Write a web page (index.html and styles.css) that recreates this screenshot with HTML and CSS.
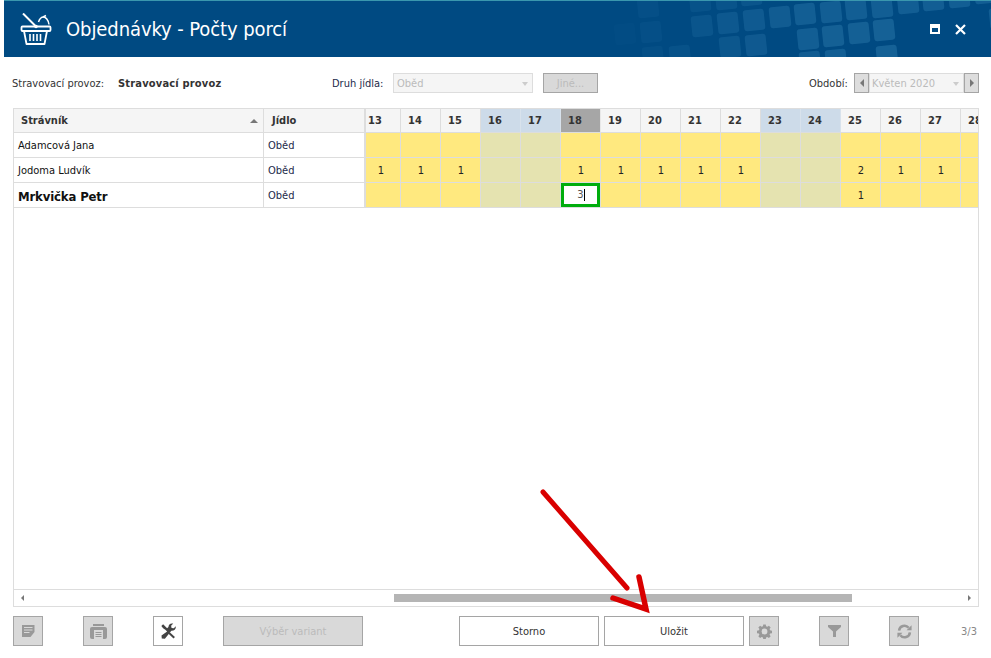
FILE: index.html
```html
<!DOCTYPE html>
<html lang="cs">
<head>
<meta charset="utf-8">
<title>Objednávky - Počty porcí</title>
<link rel="stylesheet" href="styles.css">
</head>
<body>
<div class="page">
  <header class="titlebar">
    <svg class="pattern" width="411" height="56" viewBox="580 1 411 56" aria-hidden="true">
      <defs><rect id="sq" x="-10.500" y="-10.500" width="21" height="21" rx="3" fill="#5fb0dc" transform="rotate(-6)"/></defs>
      <use href="#sq" x="625" y="34" opacity=".03"/>
      <use href="#sq" x="648" y="7" opacity=".08"/>
      <use href="#sq" x="651" y="32" opacity=".08"/>
      <use href="#sq" x="653" y="57" opacity=".07"/>
      <use href="#sq" x="680" y="56" opacity=".12"/>
      <use href="#sq" x="700" y="1" opacity=".12"/>
      <use href="#sq" x="726" y="-1" opacity=".14"/>
      <use href="#sq" x="751" y="-5" opacity=".16"/>
      <use href="#sq" x="702" y="26" opacity=".16"/>
      <use href="#sq" x="728" y="23" opacity=".2"/>
      <use href="#sq" x="754" y="20" opacity=".23"/>
      <use href="#sq" x="780" y="17" opacity=".26"/>
      <use href="#sq" x="730" y="47" opacity=".18"/>
      <use href="#sq" x="756" y="45" opacity=".22"/>
      <use href="#sq" x="805" y="14" opacity=".28"/>
      <use href="#sq" x="831" y="12" opacity=".28"/>
      <use href="#sq" x="856" y="9" opacity=".28"/>
      <use href="#sq" x="882" y="7" opacity=".28"/>
      <use href="#sq" x="908" y="3" opacity=".28"/>
      <use href="#sq" x="933" y="0" opacity=".28"/>
      <use href="#sq" x="959" y="-3" opacity=".28"/>
      <use href="#sq" x="985" y="-7" opacity=".28"/>
      <use href="#sq" x="1000" y="18" opacity=".28"/>
      <use href="#sq" x="1003" y="43" opacity=".28"/>
      <use href="#sq" x="808" y="39" opacity=".28"/>
      <use href="#sq" x="833" y="36" opacity=".3"/>
      <use href="#sq" x="859" y="33" opacity=".3"/>
      <use href="#sq" x="884" y="30" opacity=".32"/>
      <use href="#sq" x="810" y="62" opacity=".26"/>
      <use href="#sq" x="836" y="60" opacity=".28"/>
      <use href="#sq" x="887" y="56" opacity=".32"/>
    </svg>
    <svg class="logo" width="32" height="32" viewBox="0 0 32 32" fill="none" stroke="#fff" aria-hidden="true">
      <rect x="1.500" y="13.500" width="29" height="4.500" rx="1" stroke-width="1.800"/>
      <path d="M4 18l2.500 13h18L27 18" stroke-width="1.800" stroke-linejoin="round"/>
      <path d="M10 21v7M13.500 21v7M17 21v7M20.500 21v7" stroke-width="1.600"/>
      <path d="M3 0.500L15.500 13" stroke-width="2"/>
      <circle cx="16" cy="13.500" r="1.800" fill="#fff" stroke="none"/>
      <path d="M18.500 9c1-3 3-5 5-5s5 3 5.500 7.500" stroke-width="1.500"/>
      <path d="M23 4l3-1.500" stroke-width="1.500"/>
    </svg>
    <h1 class="title">Objednávky - Počty porcí</h1>
    <div class="win-controls">
      <span class="win-max"></span>
      <svg width="11" height="11" viewBox="0 0 11 11" aria-hidden="true"><path d="M1 1l9 9M10 1l-9 9" stroke="#fff" stroke-width="2.200"/></svg>
    </div>
  </header>

  <section class="filters">
    <span class="label label-provoz">Stravovací provoz:</span>
    <strong class="value">Stravovací provoz</strong>
    <span class="label label-druh">Druh jídla:</span>
    <div class="select select-druh">Oběd<span class="caret"></span></div>
    <button class="btn-other" disabled>Jiné...</button>
    <span class="label label-obdobi">Období:</span>
    <div class="spinner">
      <span class="spin-btn"><span class="tri-left"></span></span>
      <div class="select select-month">Květen 2020<span class="caret"></span></div>
      <span class="spin-btn"><span class="tri-right"></span></span>
    </div>
  </section>

  <section class="table">
    <div class="table-body">
      <div class="frozen">
        <div class="th th-name">Strávník<span class="sort"></span></div>
        <div class="th th-meal">Jídlo</div>
        <div class="td name">Adamcová Jana</div><div class="td meal">Oběd</div>
        <div class="td name">Jodoma Ludvík</div><div class="td meal">Oběd</div>
        <div class="td name name-me">Mrkvička Petr</div><div class="td meal">Oběd</div>
      </div>
      <div class="days">
        <div class="days-grid">
          <div class="dh">13</div><div class="dh">14</div><div class="dh">15</div><div class="dh we">16</div><div class="dh we">17</div><div class="dh today">18</div><div class="dh">19</div><div class="dh">20</div><div class="dh">21</div><div class="dh">22</div><div class="dh we">23</div><div class="dh we">24</div><div class="dh">25</div><div class="dh">26</div><div class="dh">27</div><div class="dh">28</div>

          <div class="c"></div><div class="c"></div><div class="c"></div><div class="c w"></div><div class="c w"></div><div class="c"></div><div class="c"></div><div class="c"></div><div class="c"></div><div class="c"></div><div class="c w"></div><div class="c w"></div><div class="c"></div><div class="c"></div><div class="c"></div><div class="c"></div>

          <div class="c">1</div><div class="c">1</div><div class="c">1</div><div class="c w"></div><div class="c w"></div><div class="c">1</div><div class="c">1</div><div class="c">1</div><div class="c">1</div><div class="c">1</div><div class="c w"></div><div class="c w"></div><div class="c">2</div><div class="c">1</div><div class="c">1</div><div class="c"></div>

          <div class="c"></div><div class="c"></div><div class="c"></div><div class="c w"></div><div class="c w"></div><div class="c edit-cell"><div class="edit"><span class="edit-val">3</span></div></div><div class="c"></div><div class="c"></div><div class="c"></div><div class="c"></div><div class="c w"></div><div class="c w"></div><div class="c">1</div><div class="c"></div><div class="c"></div><div class="c"></div>
        </div>
      </div>
    </div>
    <div class="hscroll">
      <span class="tri-left small"></span>
      <div class="track"><div class="thumb"></div></div>
      <span class="tri-right small"></span>
    </div>
  </section>

  <footer class="actions">
    <button class="ib off" disabled><svg width="13" height="12" viewBox="0 0 13 12"><path d="M0 0h12.500v7L8.500 12H0z" fill="#999"/><path d="M2 2.500h8.500M2 5h8.500M2 7.500h5.500" stroke="#d9d9d9"/></svg></button>
    <button class="ib off gap40" disabled><svg width="17" height="15" viewBox="0 0 17 15"><path d="M3 0h11v2H3z" fill="#999"/><path d="M2 3h13a2 2 0 0 1 2 2v8a2 2 0 0 1-2 2H2a2 2 0 0 1-2-2V5a2 2 0 0 1 2-2z" fill="#999"/><path d="M4 6h9v9H4z" fill="#d9d9d9"/><path d="M5.500 8.500h6M5.500 10.500h6M5.500 12.500h6" stroke="#999"/></svg></button>
    <button class="ib gap40"><svg width="16" height="16" viewBox="0 0 18 18"><path d="M1.500 3.500L3.500 1.500 8 6l1.500-1.500C9.500 2.500 11 .5 13.500.5c.8 0 1.400.2 1.400.2L12.500 3l.5 2.500 2.500.5 2.300-2.400c.3 3-1.800 5.400-5 5.200l-7.300 9-3.500-.3-.3-3.500L8 9.500 6 7.500 3.500 6z" fill="#444"/><path d="M11 10.500l5.800 5.200-1.600 1.800-5.600-5.500z" fill="#444"/></svg></button>
    <button class="tb off wide gap40" disabled>Výběr variant</button>
    <button class="tb cancel">Storno</button>
    <button class="tb save">Uložit</button>
    <button class="ib off tight" disabled><svg width="15" height="15" viewBox="0 0 18 18"><path fill="#999" fill-rule="evenodd" d="M7.500.5h3l.4 2.300 1.500.6 1.900-1.300 2.100 2.100-1.300 1.900.6 1.500 2.300.4v3l-2.300.4-.6 1.500 1.300 1.900-2.100 2.100-1.900-1.300-1.500.6-.4 2.300h-3l-.4-2.300-1.500-.6-1.900 1.300-2.100-2.100 1.300-1.900-.6-1.500-2.300-.4v-3l2.300-.4.6-1.500L1.600 4.200l2.100-2.100 1.900 1.300 1.500-.6zM9 5.500a3.500 3.500 0 1 0 0 7 3.500 3.500 0 0 0 0-7z"/></svg></button>
    <button class="ib off gap40" disabled><svg width="13" height="12" viewBox="0 0 13 12"><path d="M0 0h13v2L8 6.500V12H5V6.500L0 2z" fill="#999"/></svg></button>
    <button class="ib off gap40" disabled><svg width="15" height="15" viewBox="0 0 18 18" fill="none"><path d="M2.500 8A6.500 6.500 0 0 1 14 4.500M15.500 10A6.500 6.500 0 0 1 4 13.500" stroke="#999" stroke-width="3"/><path d="M11.500 7.500h6v-6zM6.500 10.500h-6v6z" fill="#999"/></svg></button>
    <span class="count">3/3</span>
  </footer>

  <svg class="arrow" width="120" height="130" viewBox="0 0 120 130" aria-hidden="true">
    <path d="M3 3L87 99" stroke="#d90000" stroke-width="5" stroke-linecap="round" fill="none"/>
    <path d="M73 109L106 120L99 88" stroke="#d90000" stroke-width="5.500" stroke-linecap="round" stroke-linejoin="miter" fill="none"/>
  </svg>
</div>
</body>
</html>
```
FILE: styles.css
```css
* { box-sizing: border-box; }
html, body { margin: 0; padding: 0; background: #fff; }
body { font-family: "DejaVu Sans Condensed", "DejaVu Sans", sans-serif; font-stretch: condensed; font-size: 11px; color: #222; }
.page { position: relative; width: 991px; height: 658px; overflow: hidden; }

.titlebar { position: relative; margin-left: 4px; height: 57px; background: #004A82; border-top: 1px solid #3A97AE; display: flex; align-items: center; overflow: hidden; }
.pattern { position: absolute; left: 576px; top: 0; opacity: .72; }
.logo { position: relative; margin-left: 16px; flex: none; }
.title { position: relative; margin: 0 0 0 14px; font-size: 20px; font-weight: 400; letter-spacing: -.09px; color: #fff; white-space: nowrap; }
.win-controls { position: relative; margin-left: auto; margin-right: 25px; display: flex; align-items: center; gap: 15px; }
.win-max { display: block; width: 10px; height: 10px; border: 2px solid #fff; border-top-width: 4px; }

.filters { display: flex; align-items: center; height: 20px; margin-top: 16px; color: #333; }
.label { white-space: nowrap; }
.label-provoz { margin-left: 12px; width: 106px; }
.value { width: 214px; color: #333; font-weight: 700; letter-spacing: .18px; }
.label-druh { width: 61px; color: #222a4a; }
.select { position: relative; height: 20px; line-height: 19px; border: 1px solid #ddd; background: #f5f5f5; color: #bbb; padding-left: 3px; }
.select-druh { width: 140px; }
.btn-other { margin-left: 10px; width: 55px; height: 20px; padding: 0; background: #d9d9d9; border: 1px solid #a5a5a5; color: #bbb; font: inherit; }
.label-obdobi { margin-left: 211px; width: 45px; color: #333; }
.spinner { display: flex; width: 125px; }
.spin-btn { width: 15px; height: 20px; background: #ddd; border: 1px solid #a5a5a5; display: flex; align-items: center; justify-content: center; flex: none; }
.select-month { flex: 1; padding-left: 2px; }
.caret { position: absolute; right: 4px; top: 8px; border: 3.500px solid transparent; border-top: 4px solid #ccc; border-bottom: 0; }
.tri-left { display: block; border: 4px solid transparent; border-right: 4px solid #777; border-left: 0; }
.tri-right { display: block; border: 4px solid transparent; border-left: 4px solid #777; border-right: 0; }
.tri-left.small, .tri-right.small { border-width: 3px; border-left-color: #777; border-right-color: #777; }
.tri-left.small { border-left: 0; }
.tri-right.small { border-right: 0; }

.table { margin: 15px 0 0 13px; width: 966px; height: 499px; border: 1px solid #ddd; display: flex; flex-direction: column; }
.table-body { flex: 1; display: flex; align-items: flex-start; min-height: 0; }
.frozen { flex: none; display: grid; grid-template-columns: 250px 102px; grid-auto-rows: 25px; grid-template-rows: 24px; }
.th { position: relative; display: flex; align-items: center; background: #f5f5f5; border-right: 1px solid #ddd; border-bottom: 1px solid #ddd; font-weight: 700; color: #333; }
.th-name { padding-left: 7px; }
.th-meal { padding-left: 8px; border-right: 2px solid #ddd; }
.sort { position: absolute; right: 5px; top: 10px; border: 4px solid transparent; border-bottom: 4px solid #777; border-top: 0; }
.td { display: flex; align-items: center; border-right: 1px solid #ddd; border-bottom: 1px solid #ddd; color: #111; white-space: nowrap; }
.name { padding-left: 4px; }
.name-me { font-size: 13px; font-weight: 700; padding-top: 2px; letter-spacing: -.15px; }
.meal { padding-left: 4px; border-right: 2px solid #ddd; color: #222a4a; }

.days { flex: 1; min-width: 0; overflow: hidden; }
.days-grid { margin-left: -5px; display: grid; grid-template-columns: repeat(16, 40px); grid-template-rows: 24px; grid-auto-rows: 25px; }
.dh { display: flex; align-items: center; padding-left: 7px; background: #f5f5f5; border-right: 1px solid #ddd; border-bottom: 1px solid #ddd; font-weight: 700; color: #333; }
.dh.we { background: #cddbe9; border-right-color: #d8e2ec; }
.dh.today { background: #a6a6a6; border-right-color: #e8e8e8; }
.c { display: flex; align-items: center; justify-content: center; padding-left: 1px; background: #ffe97f; border-right: 1px solid #ddd; border-bottom: 1px solid #ddd; color: #222; }
.c.w { background: #e5e3b0; }
.c.edit-cell { padding: 0; align-items: stretch; justify-content: stretch; }
.edit { flex: 1; display: flex; align-items: center; justify-content: center; background: #fff; border: 3px solid #00ad0d; color: #555; }
.edit-val { border-right: 1px solid #000; line-height: 12px; padding-right: 0; margin-left: 1px; }

.hscroll { flex: none; height: 17px; border-top: 1px solid #ddd; display: flex; align-items: center; padding: 0 7px 0 7px; }
.track { flex: 1; padding-left: 370px; }
.thumb { width: 458px; height: 8px; background: #b5b5b5; }

.actions { display: flex; align-items: stretch; height: 30px; margin: 9px 0 0 13px; }
.ib, .tb { flex: none; height: 30px; padding: 0; margin: 0; background: #fff; border: 1px solid #a5a5a5; font: inherit; color: #333; display: flex; align-items: center; justify-content: center; }
.ib { width: 30px; }
.off { background: #d9d9d9; color: #bbb; }
.gap40 { margin-left: 40px; }
.tb { width: 140px; }
.cancel { margin-left: 96px; }
.save { margin-left: 5px; }
.tight { margin-left: 5px; }
.count { margin-left: 42px; align-self: center; color: #888; }

.arrow { position: absolute; left: 540px; top: 489px; }
```
